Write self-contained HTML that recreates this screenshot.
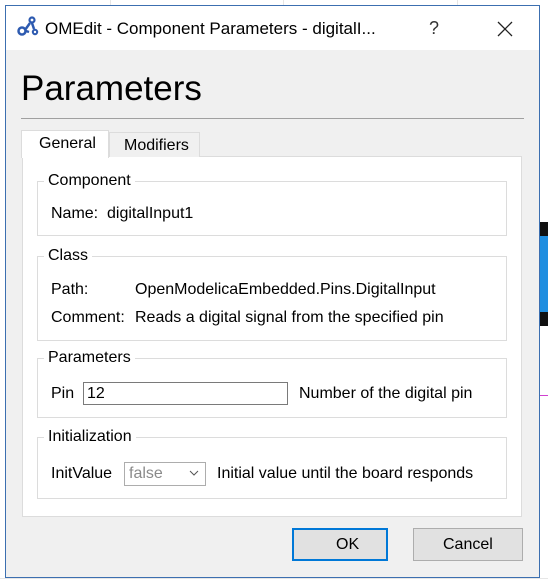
<!DOCTYPE html>
<html><head><meta charset="utf-8"><style>
*{margin:0;padding:0;box-sizing:border-box}
body{width:548px;height:582px;overflow:hidden;background:#fff;font-family:"Liberation Sans",sans-serif;font-size:16px;color:#000;position:relative}
.a{position:absolute}
.gl{position:absolute;background:#e6e6e6}
.grp{position:absolute;border:1px solid #dcdcdc}
.gt{position:absolute;background:#fff;padding:0 4px 0 4px;font-size:16px;top:-11px;left:6px;line-height:20px}
.t{position:absolute;white-space:nowrap;line-height:20px}
</style></head><body>
<div class="gl" style="left:110px;top:0;width:1px;height:5px"></div>
<div class="gl" style="left:283px;top:0;width:1px;height:5px"></div>
<div class="gl" style="left:457px;top:0;width:1px;height:5px"></div>
<div class="gl" style="left:0;top:578px;width:548px;height:1px"></div>
<div class="a" style="left:540px;top:222px;width:8px;height:104px;background:#1f8ee0"></div>
<div class="a" style="left:540px;top:222px;width:8px;height:14px;background:#111"></div>
<div class="a" style="left:540px;top:312px;width:8px;height:14px;background:#111"></div>
<div class="a" style="left:540px;top:395px;width:8px;height:1px;background:#d040d0"></div>

<div class="a" style="left:5px;top:5px;width:535px;height:573px;background:#f0f0f0;border:1px solid #3c6fb0">
 <div class="a" style="left:0;top:0;width:533px;height:44px;background:#fff"></div>
</div>
<svg class="a" style="left:16px;top:14px" width="24" height="24" viewBox="0 0 24 24">
 <circle cx="6" cy="17" r="3.5" fill="none" stroke="#2d5ab0" stroke-width="2.5"/>
 <circle cx="16" cy="6" r="2.5" fill="none" stroke="#2d5ab0" stroke-width="2.2"/>
 <circle cx="19" cy="18" r="2.2" fill="none" stroke="#2d5ab0" stroke-width="2"/>
 <path d="M9 16 L14 9 M16 9 L18 15 M13 18 L10 17" stroke="#2d5ab0" stroke-width="2.5"/>
</svg>
<div class="t" style="left:45px;top:19px;font-size:17px;line-height:20px">OMEdit - Component Parameters - digitalI...</div>
<div class="t" style="left:429px;top:18px;font-size:18px;color:#333">?</div>
<svg class="a" style="left:497px;top:21px" width="16" height="16"><path d="M1 1L15 15M15 1L1 15" stroke="#222" stroke-width="1.3"/></svg>

<div class="t" style="left:21px;top:68px;font-size:35px;line-height:42px">Parameters</div>
<div class="a" style="left:21px;top:118px;width:503px;height:1px;background:#a0a0a0"></div>

<div class="a" style="left:22px;top:156px;width:500px;height:361px;background:#fff;border:1px solid #dcdcdc"></div>
<div class="a" style="left:21px;top:130px;width:88px;height:28px;background:#fff;border:1px solid #dcdcdc;border-bottom:none"></div>
<div class="t" style="left:39px;top:134px">General</div>
<div class="a" style="left:109px;top:132px;width:91px;height:25px;background:#f0f0f0;border:1px solid #dcdcdc;border-bottom:none"></div>
<div class="t" style="left:124px;top:136px">Modifiers</div>

<div class="grp" style="left:37px;top:181px;width:470px;height:55px"><div class="gt">Component</div></div>
<div class="t" style="left:51px;top:204px">Name:&nbsp; digitalInput1</div>

<div class="grp" style="left:37px;top:256px;width:470px;height:85px"><div class="gt">Class</div></div>
<div class="t" style="left:51px;top:280px">Path:</div>
<div class="t" style="left:135px;top:280px">OpenModelicaEmbedded.Pins.DigitalInput</div>
<div class="t" style="left:51px;top:308px">Comment:</div>
<div class="t" style="left:135px;top:308px">Reads a digital signal from the specified pin</div>

<div class="grp" style="left:37px;top:358px;width:470px;height:60px"><div class="gt">Parameters</div></div>
<div class="t" style="left:51px;top:384px">Pin</div>
<div class="a" style="left:83px;top:382px;width:205px;height:23px;border:1px solid #7a7a7a;background:#fff"></div>
<div class="t" style="left:87px;top:384px">12</div>
<div class="t" style="left:299px;top:384px">Number of the digital pin</div>

<div class="grp" style="left:37px;top:437px;width:470px;height:62px"><div class="gt">Initialization</div></div>
<div class="t" style="left:51px;top:464px">InitValue</div>
<div class="a" style="left:124px;top:462px;width:82px;height:24px;border:1px solid #adadad;background:#fff"></div>
<div class="t" style="left:129px;top:464px;color:#8a8a8a">false</div>
<svg class="a" style="left:189px;top:470px" width="10" height="7"><path d="M1 1L5 5L9 1" fill="none" stroke="#555" stroke-width="1"/></svg>
<div class="t" style="left:217px;top:464px">Initial value until the board responds</div>

<div class="a" style="left:292px;top:528px;width:96px;height:33px;background:#e1e1e1;border:2px solid #0078d7"></div>
<div class="t" style="left:336px;top:535px">OK</div>
<div class="a" style="left:413px;top:528px;width:110px;height:33px;background:#e1e1e1;border:1px solid #adadad"></div>
<div class="t" style="left:443px;top:535px">Cancel</div>
</body></html>
